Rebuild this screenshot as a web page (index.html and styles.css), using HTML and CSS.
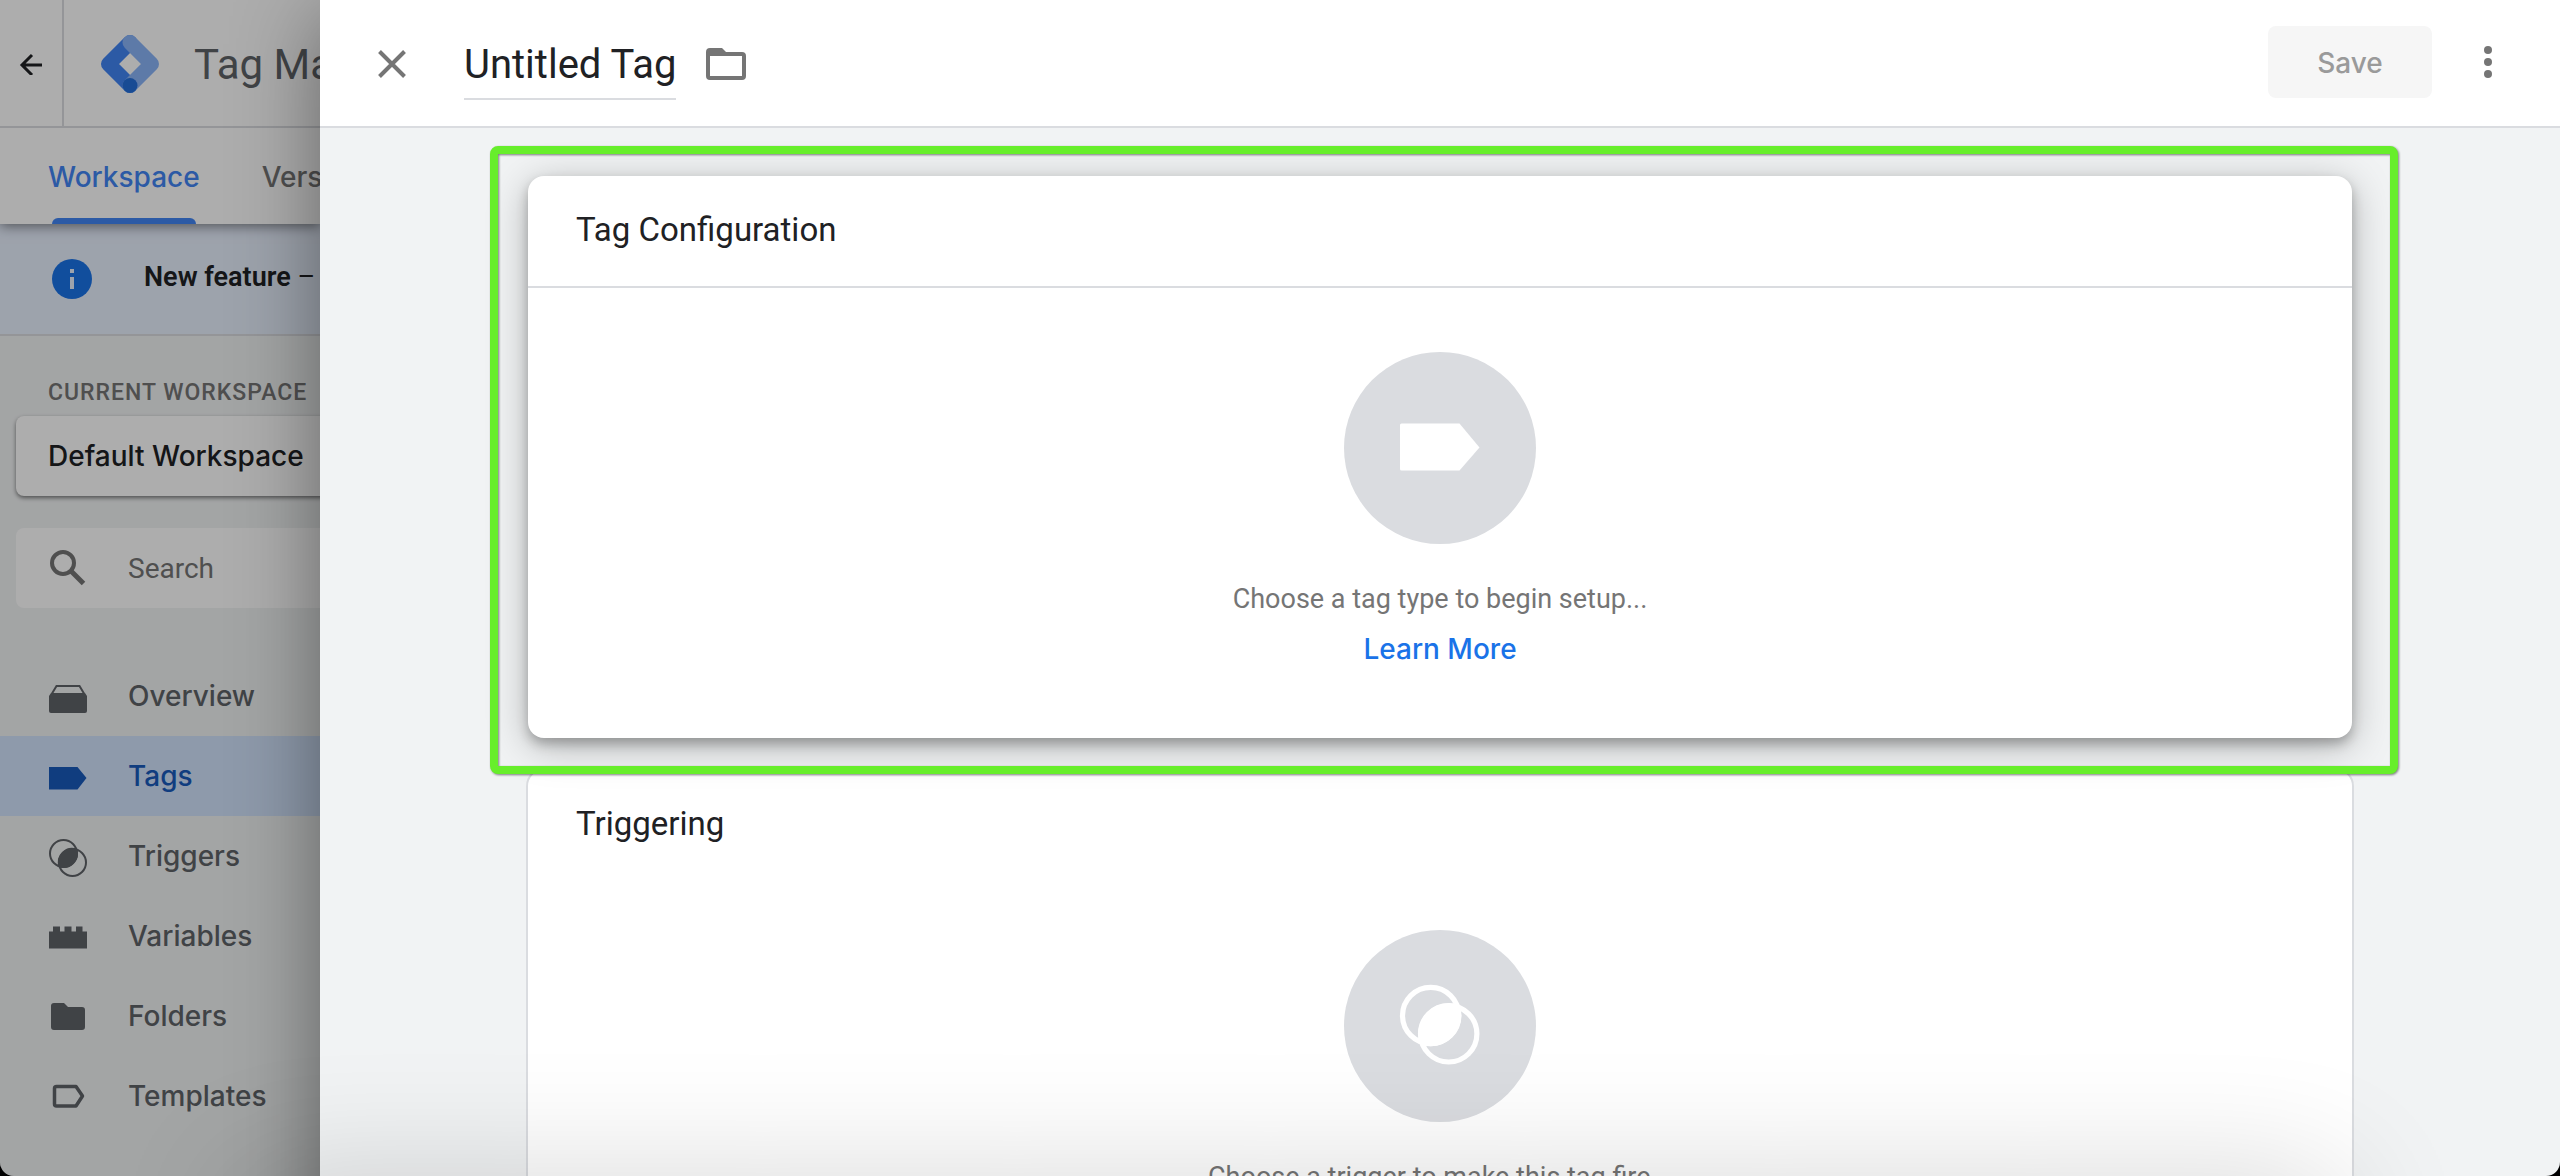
FILE: index.html
```html
<!DOCTYPE html>
<html lang="en">
<head>
<meta charset="utf-8">
<title>Tag Manager</title>
<link rel="stylesheet" href="styles.css">
</head>
<body>
<div class="window">
  <div class="app">
    <header class="app-header">
      <button class="icon-button back" aria-label="Back">
        <svg width="24" height="24" viewBox="0 0 24 24" fill="none" stroke="currentColor" stroke-width="3"><path d="M23 14H4M13 4L3 14l10 10"/></svg>
      </button>
      <div class="brand">
        <svg width="60" height="60" viewBox="0 0 60 60" fill="none" stroke-width="15" stroke-linejoin="round">
          <path d="M30 8.500L8.500 30L30 51.500" stroke="#4285f4" stroke-linecap="round"/>
          <path d="M30 8.500L51.500 30L30 51.500" stroke="#8ab4f8" stroke-linecap="round"/>
          <circle cx="30" cy="51.500" r="7.500" fill="#246fdb"/>
        </svg>
        <span class="brand-name">Tag Manager</span>
      </div>
    </header>
    <nav class="tabs">
      <a class="tab active" href="#workspace">Workspace</a>
      <a class="tab" href="#versions">Versions</a>
    </nav>
    <div class="banner">
      <svg width="40" height="40" viewBox="0 0 40 40"><circle cx="20" cy="20" r="20" fill="#1a73e8"/><path d="M18 10h4v4h-4zM18 18h4v12h-4z" fill="#e8f0fe"/></svg>
      <p class="banner-text"><strong>New feature</strong> –</p>
    </div>
    <div class="sidebar">
      <h2 class="sidebar-label">CURRENT WORKSPACE</h2>
      <button class="workspace-picker">Default Workspace</button>
      <label class="search">
        <svg width="40" height="40" viewBox="0 0 40 40" fill="none" stroke="currentColor" stroke-width="4"><circle cx="15" cy="15" r="11"/><path d="M23 23l12.500 12.500" stroke-width="5"/></svg>
        <input class="search-input" type="text" placeholder="Search" aria-label="Search">
      </label>
      <nav class="menu">
        <a class="menu-item" href="#overview">
          <svg class="menu-icon" viewBox="0 0 40 40"><path d="M4 17.500L8.500 10h23l4.500 7.500" fill="none" stroke="currentColor" stroke-width="2"/><path d="M3 17h34l2 3v15q0 2-2 2H3q-2 0-2-2V20z" fill="currentColor"/></svg>
          Overview</a>
        <a class="menu-item active" href="#tags">
          <svg class="menu-icon" viewBox="0 0 40 40"><path d="M1 11h28.500L38.500 22l-9 11.500H1z" fill="currentColor"/></svg>
          Tags</a>
        <a class="menu-item" href="#triggers">
          <svg class="menu-icon" viewBox="0 0 40 40"><g fill="none" stroke="currentColor" stroke-width="2"><circle cx="15.500" cy="17.500" r="13.500"/><circle cx="24.500" cy="26.500" r="13.500"/></g><path d="M10.700 31.100A14.400 14.400 0 0 1 29.100 12.700A14.400 14.400 0 0 1 10.700 31.100z" fill="currentColor"/></svg>
          Triggers</a>
        <a class="menu-item" href="#variables">
          <svg class="menu-icon" viewBox="0 0 40 40"><path d="M1 15.500h4v-5h7v5h4.500v-5h7v5H28v-5h6.500v5H39v17H1z" fill="currentColor"/></svg>
          Variables</a>
        <a class="menu-item" href="#folders">
          <svg class="menu-icon" viewBox="0 0 40 40"><path d="M6 7h10l4 4h14q3 0 3 3v17q0 3-3 3H6q-3 0-3-3V10q0-3 3-3z" fill="currentColor"/></svg>
          Folders</a>
        <a class="menu-item" href="#templates">
          <svg class="menu-icon" viewBox="0 0 40 40"><path d="M8.500 10.500H28L34.500 20L28 30H8.500q-2 0-2-2V12.500q0-2 2-2z" fill="none" stroke="currentColor" stroke-width="3.500" stroke-linejoin="round"/></svg>
          Templates</a>
      </nav>
    </div>
  </div>

  <main class="drawer">
    <header class="drawer-header">
      <div class="header-title">
        <button class="icon-button close" aria-label="Close">
          <svg width="28" height="28" viewBox="0 0 28 28" fill="none" stroke="currentColor" stroke-width="4"><path d="M1.500 1.500l25 25M26.500 1.500l-25 25"/></svg>
        </button>
        <input class="tag-name" type="text" value="Untitled Tag" size="10" aria-label="Tag name">
        <button class="icon-button" aria-label="Move to folder">
          <svg width="40" height="32" viewBox="0 0 40 32"><path fill-rule="evenodd" d="M4 0h12l4 4h16q4 0 4 4v20q0 4-4 4H4q-4 0-4-4V4q0-4 4-4zM4 8v20h32V8z" fill="currentColor"/></svg>
        </button>
      </div>
      <div class="header-actions">
        <button class="save" disabled>Save</button>
        <button class="icon-button" aria-label="More actions">
          <svg width="8" height="32" viewBox="0 0 8 32" fill="currentColor" overflow="visible"><circle cx="4" cy="4" r="4"/><circle cx="4" cy="16" r="4"/><circle cx="4" cy="28" r="4"/></svg>
        </button>
      </div>
    </header>
    <div class="drawer-body">
      <div class="highlighted">
        <section class="card raised">
          <h2 class="card-title divided">Tag Configuration</h2>
          <div class="card-body">
            <span class="badge"><svg width="96" height="96" viewBox="0 0 96 96"><path d="M9.500 23.500H67.500L87.500 47.500L67.500 70.500H9.500Q8 70.500 8 69V25Q8 23.500 9.500 23.500z" fill="#fff"/></svg></span>
            <p class="hint">Choose a tag type to begin setup...</p>
            <a class="learn-more" href="#learn-more">Learn More</a>
          </div>
        </section>
      </div>
      <section class="card outlined">
        <h2 class="card-title">Triggering</h2>
        <div class="card-body">
          <span class="badge"><svg width="96" height="96" viewBox="0 0 96 96"><g fill="none" stroke="#fff" stroke-width="5.200"><circle cx="38.700" cy="37.500" r="28.200"/><circle cx="56.700" cy="55.800" r="28.200"/></g><path d="M28 66.400A30.800 30.800 0 0 1 67.400 27A30.800 30.800 0 0 1 28 66.400z" fill="#fff"/></svg></span>
          <p class="hint">Choose a trigger to make this tag fire...</p>
          <a class="learn-more" href="#learn-more-triggers">Learn More</a>
        </div>
      </section>
    </div>
  </main>
</div>
</body>
</html>
```
FILE: styles.css
```css
* { box-sizing: border-box; }

html { background: #000; }

body {
  margin: 0;
  font-family: Roboto, "Liberation Sans", sans-serif;
  font-size: 28px;
  color: #202124;
}

button, input { font: inherit; color: inherit; border: 0; padding: 0; background: none; }
button { cursor: pointer; }
a { text-decoration: none; color: inherit; }
h2, p { margin: 0; font-weight: 400; }
svg { display: block; flex: none; }

.window {
  position: relative;
  display: grid;
  grid-template-columns: 320px minmax(0, 1fr);
  height: 100vh;
  overflow: hidden;
  border-radius: 0 0 14px 14px;
}

/* soft shadow rising from the lower edge of the window */
.window::after {
  content: "";
  position: absolute;
  z-index: 2;
  top: 100%;
  left: 240px;
  right: 220px;
  height: 200px;
  box-shadow: 0 0 130px rgba(0, 0, 0, .16);
  pointer-events: none;
}

.icon-button { display: flex; align-items: center; justify-content: center; color: #757575; }

/* dimmed application behind the drawer */
.app {
  position: relative;
  isolation: isolate;
  overflow: hidden;
  white-space: nowrap;
  background: #f1f3f4;
}

.app::after {
  content: "";
  position: absolute;
  inset: 0;
  background: rgba(0, 0, 0, .32);
  z-index: 3;
}

.app-header {
  position: relative;
  z-index: 2;
  display: flex;
  height: 128px;
  background: #fff;
  border-bottom: 2px solid #dadce0;
}

.back { flex: none; width: 64px; border-right: 2px solid #dadce0; color: #202124; }
.brand { display: flex; align-items: center; gap: 34px; padding: 2px 0 0 36px; }
.brand-name { font-size: 42px; color: #5f6368; }

.tabs {
  position: relative;
  z-index: 1;
  display: flex;
  gap: 62px;
  height: 96px;
  padding-left: 48px;
  background: #fff;
  color: #757575;
  font-family: Inter, sans-serif;
  font-weight: 500;
  box-shadow: 0 2px 12px rgba(0, 0, 0, .5);
}

.tab { position: relative; line-height: 98px; }
.tab.active { color: #4285f4; }

.tab.active::after {
  content: "";
  position: absolute;
  left: 4px;
  right: 4px;
  bottom: 0;
  height: 6px;
  border-radius: 6px 6px 0 0;
  background: #4285f4;
}

.banner {
  display: flex;
  align-items: center;
  gap: 52px;
  height: 112px;
  padding-left: 52px;
  background: #e8f0fe;
  border-bottom: 2px solid #dadce0;
}

.banner-text { font-size: 27px; padding-bottom: 4px; }
.banner-text strong { font-weight: 600; }

.sidebar { padding-left: 16px; }
.sidebar-label {
  padding: 41px 0 7px 32px;
  font-size: 23px;
  line-height: 32px;
  font-weight: 500;
  letter-spacing: 1px;
  color: #757575;
}

.workspace-picker {
  display: block;
  width: 480px;
  height: 80px;
  padding-left: 32px;
  border-radius: 8px;
  background: #fff;
  font-family: Inter, sans-serif;
  font-weight: 500;
  text-align: left;
  box-shadow: 0 2px 4px rgba(0, 0, 0, .5);
}

.search {
  display: flex;
  align-items: center;
  gap: 40px;
  width: 480px;
  height: 80px;
  margin: 32px 0 48px;
  padding-left: 32px;
  border-radius: 8px;
  background: #fff;
  color: #757575;
}

.search-input { flex: 1; min-width: 0; }
.search-input::placeholder { color: #757575; opacity: 1; }

.menu { margin-left: -16px; }
.menu-item {
  display: flex;
  align-items: center;
  gap: 40px;
  height: 80px;
  padding-left: 48px;
  font-family: Inter, sans-serif;
  font-weight: 500;
  color: #5f6368;
}

.menu-item.active { background: #d2e3fc; color: #185abc; }
.menu-icon { width: 40px; height: 40px; overflow: visible; }

/* drawer */
.drawer {
  position: relative;
  z-index: 1;
  display: flex;
  flex-direction: column;
  min-width: 0;
  background: #f1f3f4;
  box-shadow: 0 16px 80px rgba(0, 0, 0, .42);
}

.drawer-header {
  display: flex;
  justify-content: space-between;
  flex: none;
  height: 128px;
  padding: 0 68px 0 58px;
  background: #fff;
  border-bottom: 2px solid #dadce0;
}

.header-title { display: flex; align-items: center; padding-top: 2px; }
.close { margin-right: 58px; }

.tag-name {
  field-sizing: content;
  height: 72px;
  margin-right: 30px;
  padding-top: 2px;
  border-bottom: 2px solid #dadce0;
  font-size: 40px;
  outline: 0;
}

.header-actions { display: flex; align-items: center; gap: 52px; padding-bottom: 2px; }
.save {
  width: 164px;
  height: 72px;
  padding-top: 2px;
  border-radius: 8px;
  background: #f6f6f6;
  color: #9a9a9a;
  font-family: Inter, sans-serif;
  font-weight: 500;
}

.drawer-body {
  display: flex;
  flex-direction: column;
  gap: 32px;
  flex: 1;
  min-height: 0;
  padding: 48px 208px;
  overflow: hidden;
}

.card { flex: none; border-radius: 16px; background: #fff; }
.raised { box-shadow: 0 6px 12px rgba(0, 0, 0, .26), 0 8px 40px rgba(0, 0, 0, .26); }
.outlined { box-shadow: 0 0 0 2px #dadce0; }

.card-title {
  height: 96px;
  padding: 32px 48px 0;
  font-size: 33px;
  line-height: 43px;
}

.card-title.divided { height: 112px; border-bottom: 2px solid #dadce0; }

.card-body {
  display: flex;
  flex-direction: column;
  align-items: center;
  padding: 64px 48px;
}

.badge {
  display: grid;
  place-items: center;
  width: 192px;
  height: 192px;
  margin-bottom: 30px;
  border-radius: 50%;
  background: #dadce0;
}

.hint { font-size: 27px; line-height: 50px; color: #757575; }
.learn-more { line-height: 50px; font-family: Inter, sans-serif; font-weight: 500; color: #1a73e8; }

/* callout frame drawn over the configuration card */
.highlighted { position: relative; z-index: 1; }
.highlighted::after {
  content: "";
  position: absolute;
  inset: -30px -46px -36px -38px;
  border: 8px solid #67ee2b;
  border-radius: 8px;
  filter: drop-shadow(1px 1px 1px rgba(0, 0, 0, .5));
  pointer-events: none;
}
```
